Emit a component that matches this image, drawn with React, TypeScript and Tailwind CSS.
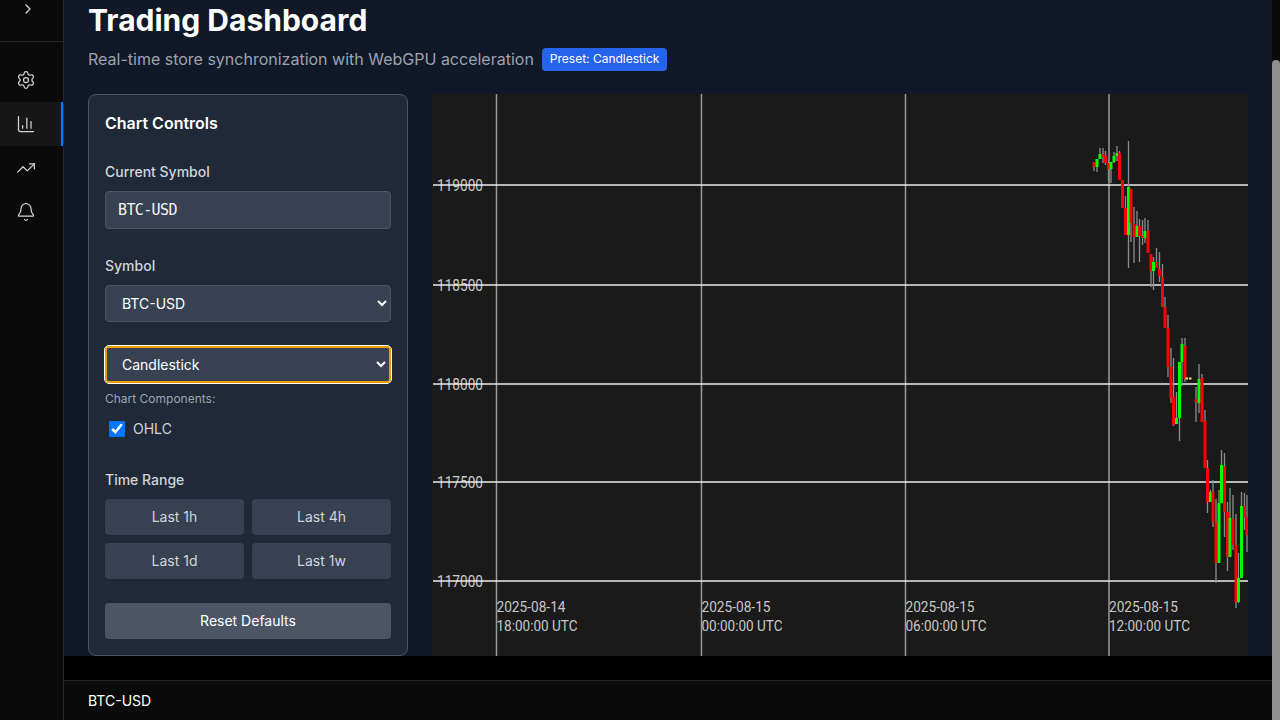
import { Bell, ChartColumn, ChevronRight, Settings, TrendingUp } from "lucide-react";

type Candle = [number, number, number, number, number, "r" | "g"];

// x, wick top, wick bottom, body top, body bottom, colour
const candles: Candle[] = [
  [1094, 162, 171, 162, 167, "r"],
  [1097, 159, 172, 159, 167, "g"],
  [1100, 148, 159, 154, 159, "g"],
  [1103, 148, 163, 154, 157, "r"],
  [1105.5, 151, 165, 156, 163, "r"],
  [1108.5, 162, 181, 163, 169, "r"],
  [1111, 162, 183, 162, 169, "g"],
  [1114, 152, 163, 156, 162, "g"],
  [1117, 146, 161, 153, 156, "g"],
  [1119.5, 151, 180, 153, 180, "r"],
  [1122.5, 180, 208, 180, 208, "r"],
  [1125.5, 196, 219, 208, 235, "r"],
  [1128.5, 141, 268, 187, 235, "g"],
  [1131, 189, 242, 189, 223, "r"],
  [1134, 207, 263, 224, 237, "r"],
  [1137, 211, 237, 226, 237, "g"],
  [1139.5, 219, 262, 226, 236, "r"],
  [1142.5, 220, 245, 236, 238, "r"],
  [1145, 218, 243, 231, 238, "g"],
  [1148, 220, 253, 231, 253, "r"],
  [1151, 254, 287, 254, 271, "r"],
  [1153.5, 257, 290, 262, 271, "g"],
  [1156.5, 248, 268, 262, 268, "r"],
  [1159.5, 252, 282, 269, 276, "r"],
  [1162.5, 264, 307, 277, 307, "r"],
  [1165, 297, 318, 307, 328, "r"],
  [1168, 315, 377, 328, 367, "r"],
  [1171, 348, 403, 367, 398, "r"],
  [1173.5, 358, 426, 397, 425, "r"],
  [1176.5, 392, 424, 418, 424, "g"],
  [1179.5, 362, 441, 362, 418, "g"],
  [1182, 338, 386, 344, 362, "g"],
  [1185, 338, 382, 346, 379, "r"],
  [1196, 387, 422, 399, 402, "r"],
  [1199, 364, 413, 379, 403, "g"],
  [1202, 374, 422, 378, 422, "r"],
  [1205, 410, 468, 421, 468, "r"],
  [1207.5, 460, 513, 468, 502, "r"],
  [1210.5, 490, 502, 492, 502, "g"],
  [1213, 480, 527, 492, 522, "r"],
  [1216, 499, 583, 522, 563, "r"],
  [1219, 490, 563, 503, 563, "g"],
  [1221.5, 450, 503, 465, 503, "g"],
  [1224.5, 453, 537, 466, 512, "r"],
  [1227.5, 502, 571, 512, 557, "r"],
  [1230, 488, 557, 518, 557, "g"],
  [1233, 495, 550, 519, 545, "r"],
  [1236, 514, 608, 545, 602, "r"],
  [1238.5, 553, 603, 578, 602, "g"],
  [1241.5, 492, 578, 506, 578, "g"],
  [1244.5, 493, 530, 506, 517, "r"],
  [1247, 495, 552, 517, 535, "r"],
];

const priceLines = [
  { y: 185, label: "119000" },
  { y: 285, label: "118500" },
  { y: 384, label: "118000" },
  { y: 482, label: "117500" },
  { y: 581, label: "117000" },
];

const timeLines = [
  { x: 496.5, date: "2025-08-14", time: "18:00:00 UTC" },
  { x: 701.5, date: "2025-08-15", time: "00:00:00 UTC" },
  { x: 905.5, date: "2025-08-15", time: "06:00:00 UTC" },
  { x: 1109, date: "2025-08-15", time: "12:00:00 UTC" },
];

const Chart = () => (
  <svg viewBox="432 94 816 562" className="block w-full h-full" style={{ fontFamily: "Roboto, sans-serif" }}>
    {timeLines.map((t) => (
      <line key={t.x} x1={t.x} x2={t.x} y1={94} y2={656} stroke="#9a9a9a" strokeWidth={1.5} />
    ))}
    {priceLines.map((p) => (
      <g key={p.y}>
        <text x={437} y={p.y + 6} fontSize={16} fill="#c8c8c8" textLength={46} lengthAdjust="spacingAndGlyphs">{p.label}</text>
        <line x1={433} x2={1248} y1={p.y} y2={p.y} stroke="#ececec" strokeWidth={1.6} />
      </g>
    ))}
    {timeLines.map((t) => (
      <g key={t.date + t.time} fontSize={15} fill="#c8c8c8">
        <text x={t.x} y={612} textLength={69} lengthAdjust="spacingAndGlyphs">{t.date}</text>
        <text x={t.x} y={631} textLength={81} lengthAdjust="spacingAndGlyphs">{t.time}</text>
      </g>
    ))}
    {candles.map(([x, wt, wb]) => (
      <line key={"w" + x} x1={x} x2={x} y1={wt} y2={wb} stroke="#8c8c8c" strokeWidth={1.3} />
    ))}
    {candles.map(([x, , , bt, bb, c]) => (
      <rect key={"b" + x} x={x - 1.5} y={bt} width={3} height={bb - bt} fill={c === "r" ? "#ff0000" : "#00ff00"} />
    ))}
    <rect x={1185.5} y={377.5} width={2.5} height={2} fill="#e8e860" />
    <rect x={1189} y={377.5} width={2.5} height={2} fill="#e8e860" />
  </svg>
);

const navItems = [
  { icon: Settings, active: false },
  { icon: ChartColumn, active: true },
  { icon: TrendingUp, active: false },
  { icon: Bell, active: false },
];

const App = () => {
  return (
    <div className="h-screen overflow-hidden flex bg-black text-white font-['Inter',sans-serif]">
      {/* SIDEBAR */}
      <aside className="w-16 shrink-0 bg-[#0a0a0a] border-r border-[#262626]">
        <div className="h-[41px] pl-5 border-b border-[#262626] text-[#d4d4d4]">
          <ChevronRight size={16} className="mt-px" />
        </div>
        <nav className="pt-4">
          {navItems.map(({ icon: Icon, active }, index) => (
            <div
              key={index}
              className={`h-11 pl-4 flex items-center text-[#d4d4d4] ${active ? "bg-[#171717] border-r-2 border-[#0a7aff]" : ""}`}
            >
              <Icon size={20} strokeWidth={1.5} />
            </div>
          ))}
        </nav>
      </aside>

      <div className="flex-1 flex flex-col min-w-0">
        {/* MAIN */}
        <main className="h-[656px] shrink-0 bg-[#111827] px-6 pt-[2px] overflow-hidden">
          <h1 className="text-3xl font-bold leading-9">Trading Dashboard</h1>
          <div className="mt-[9px] flex items-center gap-2">
            <p className="text-base text-[#9ca3af]">Real-time store synchronization with WebGPU acceleration</p>
            <span className="h-[23px] px-2 flex items-center rounded bg-[#2563eb] text-xs">Preset: Candlestick</span>
          </div>

          <div className="mt-[23px] flex gap-6">
            {/* CONTROLS */}
            <section className="w-80 shrink-0 h-[562px] rounded-lg border border-[#4b5563] bg-[#1f2937] px-4 pt-4">
              <h2 className="text-base font-semibold leading-6">Chart Controls</h2>

              <p className="mt-[27px] text-sm font-medium leading-5 text-[#d1d5db]">Current Symbol</p>
              <div className="mt-[9px] h-[38px] px-3 flex items-center rounded border border-[#4b5563] bg-[#374151] font-['DejaVu_Sans_Mono',monospace] text-[15px] tracking-[-0.63px] text-[#f3f4f6]">
                BTC-USD
              </div>

              <p className="mt-[27px] text-sm font-medium leading-5 text-[#d1d5db]">Symbol</p>
              <select defaultValue="BTC-USD" className="mt-[9px] block w-full h-[37px] px-3 rounded border border-[#4b5563] bg-[#374151] text-sm">
                <option>BTC-USD</option>
                <option>ETH-USD</option>
              </select>

              <select defaultValue="Candlestick" className="mt-6 block w-full h-[37px] px-[11px] rounded border-2 border-[#e8a100] bg-[#374151] text-sm outline outline-1 outline-white">
                <option>Candlestick</option>
                <option>Line</option>
              </select>

              <p className="mt-[8px] text-xs leading-4 text-[#9ca3af]">Chart Components:</p>
              <label className="mt-3 pl-1 flex items-center gap-2 text-sm text-[#d1d5db]">
                <input type="checkbox" defaultChecked className="m-0 w-4 h-4" />
                OHLC
              </label>

              <p className="mt-[31px] text-sm font-medium leading-5 text-[#d1d5db]">Time Range</p>
              <div className="mt-[9px] grid grid-cols-2 gap-2">
                {["Last 1h", "Last 4h", "Last 1d", "Last 1w"].map((label) => (
                  <button key={label} className="h-9 rounded bg-[#374151] text-sm text-[#d1d5db]">{label}</button>
                ))}
              </div>

              <button className="mt-6 w-full h-9 rounded bg-[#4b5563] text-sm">Reset Defaults</button>
            </section>

            {/* CHART */}
            <div className="flex-1 h-[562px] bg-[#1a1a1a]">
              <Chart />
            </div>
          </div>
        </main>

        <div className="h-6 shrink-0 bg-black" />

        {/* FOOTER */}
        <footer className="flex-1 border-t border-[#262626] bg-[#0a0a0a] px-6 flex items-center text-sm">BTC-USD</footer>
      </div>

      {/* SCROLLBAR */}
      <div className="w-2 shrink-0 bg-[#0a0a0a] pt-[60px]">
        <div className="h-full rounded-t bg-[#8f8f8f]" />
      </div>
    </div>
  );
};

export default App;
